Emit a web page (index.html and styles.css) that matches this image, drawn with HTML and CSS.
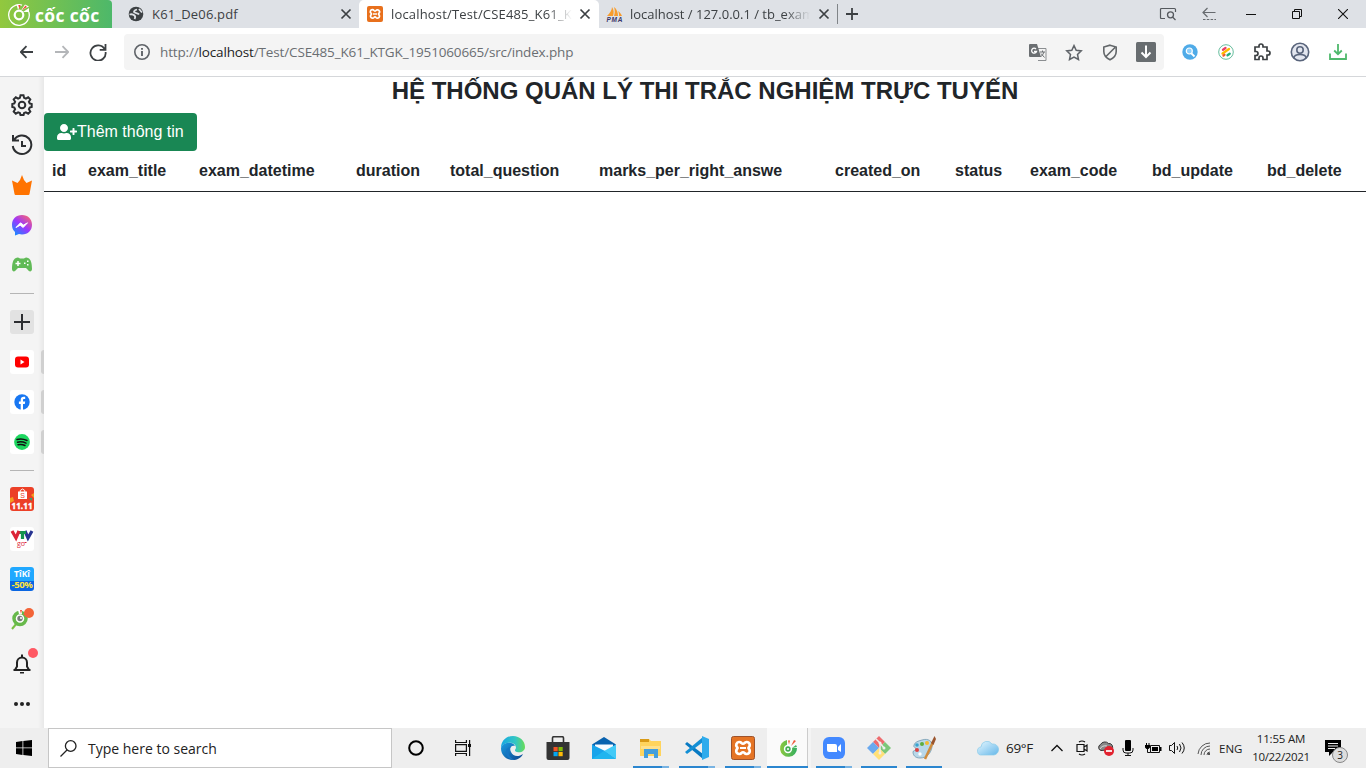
FILE: index.html
```html
<!DOCTYPE html>
<html lang="vi">
<head>
<meta charset="utf-8">
<title>Hệ thống quản lý thi trắc nghiệm</title>
<link rel="stylesheet" href="styles.css">
</head>
<body>
<header class="tabs">
  <div class="brand">
    <svg width="24" height="26" viewBox="0 0 24 26"><path d="M14 4.200A10.300 10.300 0 1 0 20.800 11" fill="none" stroke="#fff" stroke-width="1.300"/><circle cx="11" cy="14" r="4.300" fill="none" stroke="#fff" stroke-width="2.200"/><path d="M10 9 8.500 3.500h4.200zM13 9.500l4-6 4 2zM15 11l6-4v4z" fill="#fff"/><path d="m11.300 8-1-4h2.200zM14 9l3.500-4.500L19 6z" fill="#ee4d32"/></svg>
    <span class="brand-name">cốc cốc</span>
  </div>
  <div class="tab tab-first">
    <svg width="16" height="16" viewBox="0 0 16 16"><circle cx="8" cy="8" r="7.300" fill="#3c4043"/><path d="M9 3.500C7 4 6 5 6 6c1 1.500 4 .5 5 2.500M1.500 8.500c2-.5 4 0 5 1s1 2 0 3.500M11 3l3 3.500" fill="none" stroke="#dee1e6" stroke-width="1.800"/></svg>
    <span class="tab-title t1">K61_De06.pdf</span>
    <svg class="x" width="12" height="12" viewBox="0 0 12 12"><path d="m1.500 1.500 9 9m0-9-9 9"/></svg>
  </div>
  <div class="tab tab-active">
    <svg width="16" height="16" viewBox="0 0 24 24"><rect width="24" height="24" rx="3" fill="#e8701c"/><path d="M8 5.500a3 3 0 0 0-2 5.300c1 .8 1 1.600 0 2.400a3 3 0 1 0 4.500 4c.8-1 2.200-1 3 0a3 3 0 1 0 4.500-4c-1-.8-1-1.600 0-2.400a3 3 0 1 0-4.500-4c-.8 1-2.200 1-3 0A3 3 0 0 0 8 5.500z" fill="none" stroke="#fff" stroke-width="2.600"/><path d="M9 12h6" stroke="#fff" stroke-width="2.200"/></svg>
    <span class="tab-title fade t2">localhost/Test/CSE485_K61_K</span>
    <svg class="x" width="12" height="12" viewBox="0 0 12 12"><path d="m1.500 1.500 9 9m0-9-9 9"/></svg>
  </div>
  <div class="tab tab-third">
    <svg width="17" height="16" viewBox="0 0 17 16"><path d="M1 10C4 7 6 4 6 1c2 3 2 6 1 9zM8 10c1-3 1-6 0-9 3 2 4 6 4 9zM13 10c0-2 0-3-1-5 2 1 3 3 4 5z" fill="#f89c2c"/><text x="0.500" y="15.800" class="pma" textLength="16">PMA</text></svg>
    <span class="tab-title fade t3">localhost / 127.0.0.1 / tb_exam</span>
    <svg class="x" width="12" height="12" viewBox="0 0 12 12"><path d="m1.500 1.500 9 9m0-9-9 9"/></svg>
  </div>
  <svg class="new-tab" width="14" height="14" viewBox="0 0 14 14"><path d="M7 1v12M1 7h12" stroke="#3c4043" stroke-width="1.800"/></svg>
  <div class="window-controls">
    <svg width="18" height="14" viewBox="0 0 18 14"><path d="M6 11.500H2.500q-1 0-1-1v-8q0-1 1-1h13q1 0 1 1V5" fill="none" stroke="#55595e" stroke-width="1.200"/><circle cx="11.500" cy="7.800" r="3" fill="none" stroke="#55595e" stroke-width="1.300"/><path d="m13.500 10 3 3" stroke="#55595e" stroke-width="1.300"/></svg>
    <svg width="14" height="14" viewBox="0 0 14 14"><path d="M13.500 5.500H1M5.500 1 1 5.500 5.500 10" fill="none" stroke="#666a6e" stroke-width="1.200"/><path d="M1 12.500h13" stroke="#666a6e" stroke-dasharray="2.500 1.300"/></svg>
    <svg width="10" height="14" viewBox="0 0 10 14"><path d="M0 7.500h10" stroke="#111"/></svg>
    <svg width="10" height="10" viewBox="0 0 10 10" fill="none" stroke="#111"><path d="M.5 2.500h7v7h-7zM2.500 2.500v-2h7v7h-2"/></svg>
    <svg width="10" height="10" viewBox="0 0 10 10"><path d="m0 0 10 10M10 0 0 10" stroke="#111" stroke-width="1.100"/></svg>
  </div>
</header>

<nav class="toolbar">
  <svg class="nav-icon" width="14" height="14" viewBox="0 0 14 14" stroke="#3c4043"><path d="M13 7H.8M6.500 1.200.8 7l5.700 5.800"/></svg>
  <svg class="nav-icon" width="14" height="14" viewBox="0 0 14 14" stroke="#b4b6b9"><path d="M0 7h13M7.500 1.200 13.200 7l-5.700 5.800"/></svg>
  <svg class="nav-icon reload" width="18" height="18" viewBox="0 0 18 18" stroke="#3c4043"><path d="M15.800 6.500A7.600 7.600 0 1 0 16.600 9M16.500 1v5.800h-5.800"/></svg>
  <div class="address">
    <svg width="16" height="16" viewBox="0 0 16 16"><circle cx="8" cy="8" r="7.200" fill="none" stroke="#5f6368" stroke-width="1.600"/><path d="M8 7v5M8 4v1.800" stroke="#5f6368" stroke-width="1.900"/></svg>
    <span class="url">http://<b>localhost</b>/Test/CSE485_K61_KTGK_1951060665/src/index.php</span>
    <div class="address-icons">
      <svg width="18" height="17" viewBox="0 0 18 17"><path d="M7 4.500h10v12H9" fill="#f4f4f4" stroke="#8b8e91"/><path d="M1 0h7l4 13H1q-1 0-1-1V1q0-1 1-1z" fill="#6b6f72"/><path d="M7 5A2.500 2.500 0 1 0 7.500 7.500H5" fill="none" stroke="#fff" stroke-width="1.300"/><path d="M11 8h5M13.500 6.500V8M15 8q-1 3-3.500 5M12 9.500l3.500 4" fill="none" stroke="#6b6f72"/></svg>
      <svg width="18" height="17" viewBox="0 0 18 17"><path d="m9 1.600 2.200 4.700 5 .6-3.700 3.500 1 5.100L9 13l-4.500 2.500 1-5.100L1.800 6.900l5-.6z" fill="none" stroke="#5f6368" stroke-width="1.500"/></svg>
      <svg width="16" height="17" viewBox="0 0 16 17"><path d="M8 1.200 14.200 3v4.500c0 4-2.500 6.500-6.200 8.300C4.300 14 1.800 11.500 1.800 7.500V3zM3.500 13 13 3.500" fill="none" stroke="#63676a" stroke-width="1.600"/></svg>
      <svg width="20" height="20" viewBox="0 0 20 20"><rect width="20" height="20" rx="1.500" fill="#686d70"/><path d="M10 3.500v11M5.500 10.500 10 15l4.500-4.500" fill="none" stroke="#fff" stroke-width="2"/></svg>
    </div>
  </div>
  <div class="extensions">
    <svg width="16" height="16" viewBox="0 0 16 16"><circle cx="8" cy="8" r="7.700" fill="#4fabe8"/><circle cx="7.300" cy="7" r="3" fill="#8ed0fb" stroke="#fff" stroke-width="1.200"/><path d="m9.500 9.500 3 3" stroke="#fff" stroke-width="1.800"/></svg>
    <svg width="16" height="16" viewBox="0 0 16 16"><circle cx="8" cy="8" r="7.300" fill="#fff" stroke="#66bd9d"/><g stroke-width="2.300" stroke-linecap="round"><path d="m5 5.800 2.500-1.800" stroke="#e94067"/><path d="m4.500 9.500 6.500-4.500" stroke="#ffba00"/><path d="m5.500 11.500 1-.7" stroke="#ef5b30"/><path d="m9.500 11.300 2.200-1.600" stroke="#22af7d"/></g></svg>
    <svg width="18" height="18" viewBox="0 0 18 18"><path d="M2 4h4V3a2 2 0 0 1 4 0v1h4v4h1a2 2 0 0 1 0 4h-1v4.500h-4V15a2 2 0 0 0-4 0v1.500H2v-4h1a2 2 0 0 0 0-4H2z" fill="none" stroke="#3c4043" stroke-width="1.700"/></svg>
    <svg width="20" height="20" viewBox="0 0 20 20" fill="#e3e6ef" stroke="#59647b" stroke-width="1.600"><circle cx="10" cy="10" r="8.700"/><circle cx="10" cy="8" r="3.200"/><path d="M4 16q0-3.500 6-3.500t6 3.500"/></svg>
    <svg width="18" height="16" viewBox="0 0 18 16" fill="none" stroke="#4fb96c" stroke-width="1.800"><path d="M9 0v10M5.200 6.500 9 10.200l3.800-3.700M1 9.500V15h16V9.500"/></svg>
  </div>
</nav>

<div class="viewport">
  <aside class="sidebar">
    <svg width="22" height="22" viewBox="0 0 22 22" fill="none" stroke="#2c2e31" stroke-width="2"><path d="M9.500 1.300h3l.6 2.600 1.800.8 2.300-1.400 2.100 2.100-1.400 2.300.8 1.800 2 .5v3l-2 .5-.8 1.800 1.400 2.300-2.100 2.100-2.300-1.400-1.800.8-.6 2h-3l-.6-2-1.800-.8-2.300 1.400-2.100-2.100 1.400-2.300-.8-1.800-2-.5v-3l2-.5.8-1.800L2.700 5.400l2.100-2.100 2.300 1.400 1.800-.8z"/><circle cx="11" cy="11" r="3.300"/></svg>
    <svg width="22" height="22" viewBox="0 0 22 22" fill="none" stroke="#2c2e31" stroke-width="2"><path d="M3 6A9.300 9.300 0 1 1 1.800 12M2 1v5.500h6M11 7v5h4"/></svg>
    <svg width="22" height="22" viewBox="0 0 22 22"><path d="M1 6.500l5.500 2.500 2.500-3 2-5 2 5 2.500 3L21 6.500 18.500 20q-.3 1-1 1h-13q-.7 0-1-1z" fill="#ff7300"/></svg>
    <svg width="22" height="22" viewBox="0 0 22 22"><defs><linearGradient id="msg" x1=".1" y1="1" x2=".9" y2="0"><stop stop-color="#0894ff"/><stop offset=".5" stop-color="#9b36ff"/><stop offset="1" stop-color="#ff6968"/></linearGradient></defs><path d="M11 1c6 0 10 4 10 9.700s-4 9.700-10 9.700c-1 0-2-.1-3-.4L4 21.500V18c-2-2-3-4-3-7.300C1 5 5 1 11 1z" fill="url(#msg)"/><path d="m5 13.500 4.500-4.700 3 2.300 4-2.300-4.300 4.700-3-2.300z" fill="#fff" stroke="#fff"/></svg>
    <svg width="22" height="16" viewBox="0 0 22 16"><path d="M5 1q2-1 4 .6h4Q15 0 17 1c3 1 4 6 4 11 0 3-3 3-4 1l-2-2H7l-2 2c-1 2-4 2-4-1C1 7 2 2 5 1z" fill="#61ba57"/><path d="M7 4v5M4.500 6.500h5" stroke="#fff" stroke-width="1.500"/><path d="M13 5.500h1.500V7H13zM16 3.500h1.500V5H16zM16 7h1.500v1.500H16z" fill="#fff"/></svg>
    <hr>
    <div class="tile tile-add"><svg width="16" height="16" viewBox="0 0 16 16"><path d="M8 0v16M0 8h16" stroke="#2c2e31" stroke-width="2"/></svg></div>
    <div class="tile pinned"><svg width="14" height="12" viewBox="0 0 14 12"><rect y=".5" width="14" height="11" rx="3" fill="#f00"/><path d="m5.500 3.500 4 2.500-4 2.500z" fill="#fff"/></svg></div>
    <div class="tile pinned"><svg width="16" height="16" viewBox="0 0 16 16"><circle cx="8" cy="8" r="7.700" fill="#1877f2"/><path d="M6.700 16V10H4.900V7.500h1.800V6c0-2.200 1.100-3.300 3-3.300l1.500.1V5h-1C9.300 5 9 5.500 9 6.200v1.300h2.200l-.4 2.500H9v6z" fill="#fff"/></svg></div>
    <div class="tile pinned"><svg width="16" height="16" viewBox="0 0 16 16"><circle cx="8" cy="8" r="7.900" fill="#1ed760"/><path d="M3 5.500q5-1.300 10 1M3.500 8.200q4.500-1 8.500 1M4 10.700q4-.8 7 .8" fill="none" stroke="#111" stroke-width="1.500" stroke-linecap="round"/></svg></div>
    <hr>
    <div class="tile shopee"><svg width="24" height="24" viewBox="0 0 24 24"><path d="m0 11 3-1 1 4-4 2zM21 8l3-2v5zM3 3l3 2" fill="#f49d20"/><path d="M19 11h3v3z" fill="#24a87a"/><path d="M8 4.500h9V12H8z" fill="#fff"/><path d="M10.200 5V3.500q2.300-3 4.600 0V5" fill="none" stroke="#fff"/><text x="10.300" y="11" class="logo-s">S</text><text x="1.500" y="21.500" class="logo-1111" textLength="21">11.11</text></svg></div>
    <div class="tile"><svg width="24" height="24" viewBox="0 0 24 24" fill="none" stroke-width="3.200"><path d="m15 4 3 7 4-7" stroke="#273391"/><path d="M8 5.500h8M12.500 5v7" stroke="#159350"/><path d="m2 4 4 7 3-7" stroke="#dc2538"/><text x="7" y="19" class="logo-go">go</text><path d="M14.500 15.500h2" stroke="#dc2538" stroke-width="1"/></svg></div>
    <div class="tile tiki"><span class="tiki-name">TîKî</span><span class="tiki-sale">-50%</span></div>
    <div class="alert-icon coc"><svg width="24" height="24" viewBox="0 0 24 24"><path d="m2 22 5-6" stroke="#78bf43" stroke-width="2"/><circle cx="10" cy="11.500" r="6" fill="#fff" stroke="#67b94b" stroke-width="3.500"/><circle cx="10" cy="11.500" r="2.700" fill="#777d78"/><circle cx="11" cy="11" r="1" fill="#fff"/><path d="M9 7 8 3h4v4z" fill="#fff"/><path d="m11 7-1-4 2 0zM13 8l4-4v4z" fill="#ef5735"/></svg><i></i></div>
    <div class="alert-icon bell"><svg width="20" height="20" viewBox="0 0 20 20"><path d="M3.500 15.500V15L5 12.500v-4a5 5 0 0 1 10 0v4l1.500 2.500v.5M1.500 16h17" fill="none" stroke="#222" stroke-width="2"/><path d="M8 18h4v1.500H8zM9 .5h2v3H9z" fill="#222"/></svg><i></i></div>
    <svg width="18" height="6" viewBox="0 0 18 6" fill="#222"><circle cx="3" cy="3" r="2"/><circle cx="9" cy="3" r="2"/><circle cx="15" cy="3" r="2"/></svg>
  </aside>
  <main class="page">
    <h1>HỆ THỐNG QUÁN LÝ THI TRẮC NGHIỆM TRỰC TUYẾN</h1>
    <a class="btn"><svg width="20" height="16" viewBox="0 0 640 512"><path fill="#fff" d="M624 208h-64v-64c0-8.800-7.200-16-16-16h-32c-8.800 0-16 7.200-16 16v64h-64c-8.800 0-16 7.200-16 16v32c0 8.800 7.200 16 16 16h64v64c0 8.800 7.200 16 16 16h32c8.800 0 16-7.200 16-16v-64h64c8.800 0 16-7.200 16-16v-32c0-8.800-7.200-16-16-16zm-400 48c70.700 0 128-57.300 128-128S294.700 0 224 0 96 57.300 96 128s57.300 128 128 128zm89.600 32h-16.700c-22.200 10.200-46.900 16-72.900 16s-50.600-5.800-72.900-16h-16.700C60.200 288 0 348.200 0 422.400V464c0 26.500 21.500 48 48 48h352c26.500 0 48-21.500 48-48v-41.600c0-74.200-60.200-134.400-134.400-134.400z"/></svg>Thêm thông tin</a>
    <table>
      <colgroup><col class="c1"><col class="c2"><col class="c3"><col class="c4"><col class="c5"><col class="c6"><col class="c7"><col class="c8"><col class="c9"><col class="c10"><col class="c11"></colgroup>
      <thead><tr><th>id</th><th>exam_title</th><th>exam_datetime</th><th>duration</th><th>total_question</th><th>marks_per_right_answe</th><th>created_on</th><th>status</th><th>exam_code</th><th>bd_update</th><th>bd_delete</th></tr></thead>
    </table>
  </main>
</div>

<footer class="taskbar">
  <div class="start"><svg width="16" height="16" viewBox="0 0 16 16"><path d="m0 2 6.500-1v6.500H0zM7.300.900 16 0v7.500H7.300zM0 8.300h6.500V15L0 14zM7.300 8.300H16V16l-8.700-1z"/></svg></div>
  <div class="search"><svg width="17" height="17" viewBox="0 0 17 17" fill="none" stroke="#222" stroke-width="1.300"><circle cx="10.700" cy="6" r="5.300"/><path d="m7 10-6.500 6.500"/></svg><span>Type here to search</span></div>
  <div class="slot"><svg width="16" height="16" viewBox="0 0 16 16"><circle cx="8" cy="8" r="6.800" fill="none" stroke="#000" stroke-width="2"/></svg></div>
  <div class="slot"><svg width="17" height="16" viewBox="0 0 17 16" fill="none" stroke="#111" stroke-width="1.200"><path d="M.6 0v2.500h10.800V0M.6 16v-2.500h10.800V16M.6 4.600h10.800v6.800H.6zM14.600 0v16"/><path d="M13 4h3v3h-3z" fill="#111" stroke="none"/></svg></div>
  <div class="slot edge"><svg width="24" height="24" viewBox="0 0 24 24"><defs><linearGradient id="e1" x2="1"><stop stop-color="#16a8e2"/><stop offset=".6" stop-color="#33c6c4"/><stop offset="1" stop-color="#68dc57"/></linearGradient><linearGradient id="e2" x2="1" y2="1"><stop stop-color="#1b9de2"/><stop offset="1" stop-color="#0c458e"/></linearGradient></defs><path d="M0 12C0 5 5 0 12 0s12 5 12 11c0 4-4 6-8 5-3-1-2-2-1-4C15 5 3 5 0 12z" fill="url(#e1)"/><path d="M0 12c2-6 12-7 14-2-4-1-6 2-4 6 2 5 8 5 12 2-2 4-6 6-10 6C5 24 0 19 0 12z" fill="url(#e2)"/><path d="M10 11c-5 4-2 11 4 13-6 0-10-5-9-9 .5-3 3-4 5-4z" fill="#1476c5"/></svg></div>
  <div class="slot"><svg width="24" height="24" viewBox="0 0 24 24"><path d="M6.500 7V2q0-1.300 1.300-1.300h8.400q1.300 0 1.300 1.300v5" fill="none" stroke="#333" stroke-width="1.600"/><path d="M0.500 6h23v16q0 2-2 2h-19q-2 0-2-2z" fill="#333"/><path d="M7.500 11h4.200v4.200H7.500z" fill="#f35325"/><path d="M12.500 11h4.200v4.200h-4.200z" fill="#81bc06"/><path d="M7.500 16h4.200v4.200H7.500z" fill="#05a6f0"/><path d="M12.500 16h4.200v4.200h-4.200z" fill="#ffba08"/></svg></div>
  <div class="slot"><svg width="24" height="24" viewBox="0 0 24 24"><path d="M0 8.500 12 1l12 7.500-2 3H2z" fill="#0862af"/><path d="M3 8.500h18v8H3z" fill="#f8fbff"/><path d="m0 8.500 14 7L24 23H0z" fill="#18a4eb"/><path d="M24 8.500V23L12 15z" fill="#42caf7"/><path d="m0 23 12-8 12 8z" fill="#20b5ef"/></svg></div>
  <div class="slot running"><svg width="22" height="22" viewBox="0 0 22 22"><path d="M0 2h9l2 2h10v15H0z" fill="#ffd45d"/><path d="M0 2h9v3H0z" fill="#d99a16"/><path d="M4 12h14v9h-4v-4H8v4H4z" fill="#449fdc"/><path d="M1 9h19v3H1z" fill="#ffe18b"/></svg></div>
  <div class="slot running"><svg width="24" height="24" viewBox="0 0 24 24"><path d="m0 8 2-2 16 12v5z" fill="#087ac3"/><path d="m0 16 2 2L18 6V1z" fill="#138fd5"/><path d="m17 0 7 3v18l-7 3z" fill="#2eabec"/></svg></div>
  <div class="slot running"><svg width="24" height="24" viewBox="0 0 24 24"><rect x=".5" y=".5" width="23" height="23" rx="2" fill="#e57424" stroke="#9d522b"/><path d="M8 6a3 3 0 0 0-2 5c.7.600.7 1.400 0 2a3 3 0 1 0 4.500 4c.8-1 2.200-1 3 0a3 3 0 1 0 4.500-4c-.7-.6-.7-1.400 0-2a3 3 0 1 0-4.500-4c-.8 1-2.200 1-3 0A3 3 0 0 0 8 6z" fill="none" stroke="#fff" stroke-width="2.700"/><path d="M9 12h6" stroke="#fff" stroke-width="2"/></svg></div>
  <div class="slot running current"><svg width="20" height="20" viewBox="0 0 20 20"><defs><linearGradient id="cc" x2="1"><stop stop-color="#8cc83f"/><stop offset="1" stop-color="#34af60"/></linearGradient></defs><path d="M9 2a8.500 8.500 0 1 0 10 8h-5l-5-3z" fill="url(#cc)"/><circle cx="10" cy="11" r="4.200" fill="#fff"/><circle cx="10" cy="11" r="2.700" fill="#44ae53"/><circle cx="10" cy="11" r="1" fill="#fff"/><path d="m11 6.500-1-4 2 0zM13 8l3-6 2 1z" fill="#ef5939"/><path d="m14 10 4-3 1 2z" fill="#43b45b"/></svg></div>
  <div class="slot running zoomapp"><svg width="22" height="22" viewBox="0 0 22 22"><rect width="22" height="22" rx="6" fill="#4389ff"/><path d="M4 7h8q2 0 2 2v6H6q-2 0-2-2zM15 10l3-3v8l-3-2z" fill="#fff"/></svg></div>
  <div class="slot running git"><svg width="24" height="24" viewBox="0 0 24 24"><path d="m12 0 6 6-6 6-6-6z" fill="#ee6b6e"/><path d="m6 6 6 6-6 6-6-6z" fill="#6aa9ef"/><path d="m18 6 6 6-6 6-6-6z" fill="#7bc779"/><path d="m12 12 6 6-6 6-6-6z" fill="#ffe078"/><path d="m9 3 4 4v10M13 7l4 5" fill="none" stroke="#eee" stroke-width="1.500"/><circle cx="13" cy="7" r="1.500" fill="#eee"/><circle cx="13" cy="17" r="1.500" fill="#eee"/><circle cx="17" cy="12" r="1.500" fill="#eee"/></svg></div>
  <div class="slot running git"><svg width="26" height="26" viewBox="0 0 26 26"><path d="M11 5c6-2 11 1 10 7-1 6-5 11-12 11-5 0-7-3-7-6 0-2 3-1 3-3s-3-1-2-4c1-3 4-4 8-5z" fill="#b8d7e9" stroke="#7199b0" stroke-width=".8"/><circle cx="6" cy="10" r="1.800" fill="#39a4cf"/><circle cx="11" cy="9" r="2" fill="#5dad3d"/><circle cx="16" cy="8" r="2" fill="#f4b931"/><circle cx="6" cy="15" r="2" fill="#dd4142"/><circle cx="9" cy="19" r="1.700" fill="#fff"/><path d="m14 24 8-17" stroke="#cf8c3e" stroke-width="2.500"/><path d="m20 8 3.500-7L25 4l-2.500 6z" fill="#9a552e"/></svg></div>
  <div class="tray">
    <svg width="22" height="18" viewBox="0 0 22 18"><defs><linearGradient id="cl" x2="1" y2="1"><stop stop-color="#e6f7ff"/><stop offset="1" stop-color="#65b7e9"/></linearGradient></defs><path d="M5 16a4 4 0 0 1-1-8 6 6 0 0 1 11-3 5 5 0 0 1 2 11z" fill="url(#cl)" stroke="#8acbea" stroke-width=".7"/></svg>
    <span class="temp">69°F</span>
    <svg class="chev" width="12" height="8" viewBox="0 0 12 8"><path d="m.5 7 5.500-5.500L11.500 7" fill="none" stroke="#111" stroke-width="1.300"/></svg>
    <svg class="meet" width="12" height="16" viewBox="0 0 12 16" fill="none" stroke="#111" stroke-width="1.200"><path d="M1 4.500h7v7H1zM8 7l3-2v6L8 9M3 2q3-2 6 0M3 14q3 2 6 0"/></svg>
    <svg class="cloud" width="17" height="16" viewBox="0 0 17 16"><path d="M4 10.500a3.200 3.200 0 0 1-.5-6 5 5 0 0 1 8-1 3.500 3.500 0 0 1 3 6z" fill="#888" stroke="#333"/><path d="M3 9q2-4 7-3" fill="none" stroke="#ddd"/><circle cx="12" cy="11" r="5" fill="#e1222f"/><path d="M9 11h6" stroke="#fff" stroke-width="1.700"/></svg>
    <svg class="mic" width="12" height="16" viewBox="0 0 12 16"><rect x="3" width="6" height="11" rx="1"/><path d="M1 8v2q0 3 3 3h4q3 0 3-3V8M6 13v3M3 15.500h6" fill="none" stroke="#111"/></svg>
    <svg class="battery" width="17" height="13" viewBox="0 0 17 13"><path d="M5.500 3.500h9v7h-9z" fill="none" stroke="#111"/><path d="M7 5h6v4H7zM15 5h1.500v4H15zM0 3h5v2.500L3.500 7h-2L0 5.500zM1 1h1v2H1zM3.500 1h1v2h-1z"/><path d="M2.500 7v3.500h3" fill="none" stroke="#111"/></svg>
    <svg class="volume" width="17" height="14" viewBox="0 0 17 14" fill="none" stroke="#111"><path d="M.5 4.500h2l3-3v11l-3-3h-2zM8 5q1.500 2 0 4M10.500 3q3 4 0 8M13 1.500q4.500 5.500 0 11"/></svg>
    <svg class="wifi" width="15" height="15" viewBox="0 0 15 15" fill="none" stroke="#555"><path d="M1 13A12 12 0 0 1 13 2M4 14a9 9 0 0 1 9-9M7 14a6 6 0 0 1 6-6M10 14a3 3 0 0 1 3-3"/><circle cx="12" cy="13" r="1" fill="#222" stroke="none"/></svg>
    <span class="lang">ENG</span>
    <div class="clock"><span class="time">11:55 AM</span><span class="date">10/22/2021</span></div>
    <div class="notice"><svg width="17" height="17" viewBox="0 0 17 17"><path d="M0 0h16v12H8l-4 4v-4H0z"/><path d="M3 3.500h10M3 6h10M3 8.500h7" stroke="#eee"/></svg><span>3</span></div>
  </div>
</footer>
</body>
</html>
```
FILE: styles.css
```css
* { box-sizing: border-box; }
body { margin: 0; width: 1366px; height: 768px; display: flex; flex-direction: column; overflow: hidden; background: #fff; font-family: "Open Sans", "Noto Sans", sans-serif; color: #222; }
svg { display: block; flex: none; }
span { white-space: nowrap; }

.tabs { height: 28px; display: flex; align-items: center; background: #dee1e6; flex: none; }
.brand { width: 112px; height: 28px; padding-left: 8px; display: flex; align-items: center; gap: 3px; background: linear-gradient(90deg, #92c83e, #4db86a); border-top-right-radius: 4px; }
.brand-name { color: #fff; font: 700 17.500px/28px "Open Sans", sans-serif; letter-spacing: 0.35px; padding-top: 2px; }
.tab { height: 28px; display: flex; align-items: center; font-size: 13px; letter-spacing: 0.17px; color: #3c4043; }
.tab-first { width: 247px; padding: 0 7px 0 16px; }
.tab-active { width: 240px; padding: 0 8px; background: #fff; border-radius: 5px 5px 0 0; }
.tab-third { width: 239px; height: 20px; padding: 0 7px; border-right: 1px solid #808488; }
.tab-title { margin-left: 8px; flex: none; }
.t2 { width: 181px; }
.t3 { width: 180px; margin-left: 7px; letter-spacing: 0; }
.fade { -webkit-mask-image: linear-gradient(90deg, #000 86%, transparent); mask-image: linear-gradient(90deg, #000 86%, transparent); }
.x { margin-left: auto; stroke: #3c4043; stroke-width: 1.7; }
.pma { font: italic 700 6.500px "Liberation Sans", sans-serif; letter-spacing: 0; fill: #39366a; }
.new-tab { margin-left: 7px; }
.window-controls { margin-left: auto; padding-right: 18px; display: flex; align-items: center; }
.window-controls svg + svg { margin-left: 36px; }
.window-controls svg:nth-child(2) { margin-left: 25px; }
.window-controls svg:nth-child(3) { margin-left: 30px; }

.toolbar { height: 49px; flex: none; border-bottom: 1px solid #d5d7da; display: flex; align-items: center; padding-left: 20px; }
.nav-icon { fill: none; stroke-width: 1.8; margin-right: 21px; }
.reload { margin: 0 17px 0 -1px; }
.address { width: 1040px; height: 36px; background: #f4f4f4; border-radius: 4px; display: flex; align-items: center; padding: 0 8px 0 10px; }
.url { margin-left: 10px; font-size: 13.500px; letter-spacing: -0.15px; color: #6a6e72; }
.url b { font-weight: 400; color: #222; }
.address-icons { margin-left: auto; display: flex; align-items: center; gap: 18px; }
.address-icons svg:nth-child(-n+2) { transform: translateX(-1px); }
.extensions { margin-left: 18px; display: flex; align-items: center; gap: 19px; }
.extensions svg:nth-child(n+2) { transform: translateX(1px); }

.viewport { height: 651px; display: flex; flex: none; }
.sidebar { width: 44px; background: linear-gradient(90deg, #f4f4f4 38px, #e8e8e8); padding-top: 17px; display: flex; flex-direction: column; align-items: center; flex: none; }
.sidebar > svg { margin-bottom: 18px; }
.sidebar > svg:nth-child(5) { margin: 3px 0 20px; }
.sidebar hr { width: 24px; height: 1px; border: 0; background: #b5b5b5; margin: 0 0 16px; flex: none; }
.tile { width: 24px; height: 24px; margin-bottom: 16px; border-radius: 3px; background: #fff; display: flex; align-items: center; justify-content: center; flex: none; position: relative; overflow: visible; }
.tile-add { background: #e2e2e2; }
.pinned::after { content: ""; position: absolute; left: 31px; top: 0; width: 3px; height: 24px; background: #d0d0d0; border-radius: 3px 0 0 3px; }
.shopee { background: #ec4027; }
.logo-s { font: 7px "Liberation Sans", sans-serif; fill: #ec4027; }
.logo-1111 { font: 700 8px "Open Sans", sans-serif; fill: #fff; stroke: #fff; stroke-width: .4; }
.logo-go { font: 7px "Open Sans", sans-serif; fill: #dc2538; stroke: none; }
.tiki { background: linear-gradient(#20a8ff 57%, #0a66e2 57%); flex-direction: column; }
.tiki span { font-weight: 700; font-size: 8.500px; line-height: 11px; color: #fff; }
.tiki .tiki-sale { font-size: 9.500px; color: #ffe53b; letter-spacing: -.4px; }
.alert-icon { width: 24px; height: 24px; position: relative; margin-bottom: 23px; flex: none; }
.alert-icon i { position: absolute; width: 10px; height: 10px; border-radius: 50%; background: #ff5964; top: -6px; right: -6px; }
.coc i { background: #f36438; top: 1px; right: 0; }
.bell { width: 20px; height: 20px; margin-bottom: 27px; }
.sidebar > svg:last-child { margin: 0; }

.page { flex: 1; font-family: "Liberation Sans", Arial, sans-serif; color: #212529; }
.page h1 { margin: -1px 0 8px; font-size: 24px; line-height: 29px; font-weight: 700; text-align: center; white-space: nowrap; }
.btn { display: inline-flex; align-items: center; width: 153px; height: 38px; padding-left: 13px; border-radius: 4px; background: #198754; color: #fff; font-size: 16px; vertical-align: top; }
table { width: 1322px; table-layout: fixed; border-collapse: collapse; }
th { height: 40px; padding: 0 0 0 8px; text-align: left; font-size: 16px; border-bottom: 1px solid #212529; white-space: nowrap; }
.c1 { width: 36px; } .c2 { width: 111px; } .c3 { width: 157px; } .c4 { width: 94px; } .c5 { width: 149px; } .c6 { width: 236px; } .c7 { width: 120px; } .c8 { width: 75px; } .c9 { width: 122px; } .c10 { width: 115px; } .c11 { width: 107px; }

.taskbar { height: 40px; flex: none; display: flex; background: #eee; }
.start { width: 48px; display: flex; align-items: center; justify-content: center; }
.search { width: 344px; border: 1px solid #c6c6c6; background: #fff; display: flex; align-items: center; padding-left: 11px; gap: 11px; font-size: 14px; }
.slot { width: 48px; display: flex; align-items: center; justify-content: center; flex: none; }
.slot + .slot { width: 46px; }
.slot.edge { width: 53px; margin-right: -4px; }
.slot.edge + .slot + .slot { margin-right: 1px; }
.slot.running { background: linear-gradient(90deg, #2b86cf 80%, #78b3e2 80%) 5px 38px / 36px 2px no-repeat; }
.slot.current { background: linear-gradient(#2b86cf, #2b86cf) 0 38px / 41px 2px no-repeat, linear-gradient(90deg, #fafafa 40px, #ccc 40px, #ccc 41px, #f4f4f4 41px); width: 44px; margin-left: 1px; padding-right: 2px; }
.slot.zoomapp { width: 45px; }
.slot.git { background: linear-gradient(#2b86cf, #2b86cf) 5px 38px / 36px 2px no-repeat; width: 45px; }
.tray { margin-left: auto; width: 389px; display: flex; align-items: center; }
.temp { margin-left: 7px; width: 45px; font-size: 13.500px; letter-spacing: -.3px; }
.meet { margin-left: 13px; } .cloud { margin-left: 9px; } .mic { margin-left: 8px; } .battery { margin-left: 11px; } .volume { margin-left: 7px; } .wifi { margin-left: 11px; }
.lang { margin-left: 7px; width: 25px; font-size: 11.500px; }
.clock { width: 58px; margin-left: 8px; display: flex; flex-direction: column; align-items: center; font-size: 11.500px; line-height: 18px; letter-spacing: -.2px; }
.date { letter-spacing: -.35px; }
.notice { margin-left: 15px; position: relative; }
.notice span { position: absolute; left: 7px; top: 7px; width: 16px; height: 16px; border-radius: 50%; border: 1px solid #888; background: #ddd; font-size: 10px; line-height: 14px; text-align: center; }
```
